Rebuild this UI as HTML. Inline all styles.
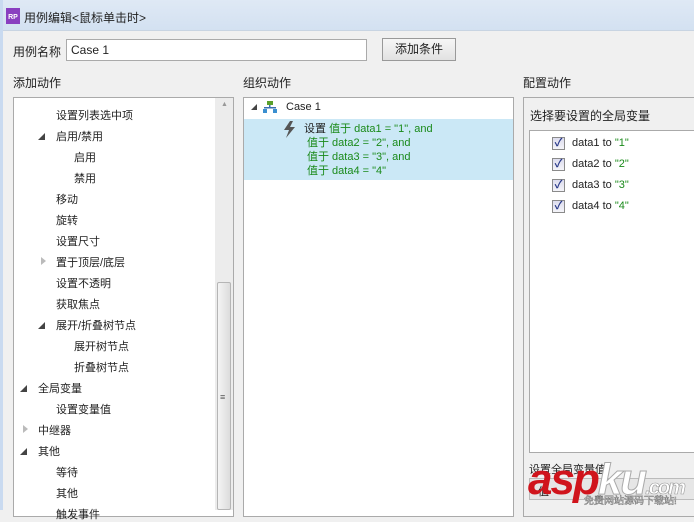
<!DOCTYPE html>
<html><head><meta charset="utf-8"><style>
*{margin:0;padding:0;box-sizing:border-box}
body{width:694px;height:510px;overflow:hidden;background:#f0f0f0;font-family:"Liberation Sans","Noto Sans CJK SC",sans-serif;font-size:11px;color:#222;position:relative}
.a{position:absolute;white-space:nowrap}
.tb{left:0;top:0;width:694px;height:31px;background:linear-gradient(#dfe9f5,#d3e1f1);border-bottom:1px solid #c8d4e2}
.panel{background:#fff;border:1px solid #aaa}
.tri{width:0;height:0;border-left:7px solid transparent;border-bottom:7px solid #444}
.tro{width:0;height:0;border-top:4px solid transparent;border-bottom:4px solid transparent;border-left:5px solid #bbb}
.g{color:#1a8a1a}
.cb{width:13px;height:13px;border:1px solid #8a8a8a;background:linear-gradient(#dde,#f4f4f8);font-size:11px;line-height:11px;text-align:center;color:#2a3a8a;font-weight:bold}
</style></head><body>
<div class="a tb"></div>
<div class="a" style="left:0;top:0;width:3px;height:510px;background:#c9daf0"></div>
<div class="a" style="left:6px;top:8px;width:14px;height:16px;background:#8a3fc0;color:#fff;font-size:7px;line-height:20px;text-align:center;font-weight:bold">RP</div>
<div class="a" style="left:24px;top:9px;font-size:12px">用例编辑&lt;鼠标单击时&gt;</div>

<div class="a" style="left:13px;top:43px;font-size:12px">用例名称</div>
<div class="a" style="left:66px;top:39px;width:301px;height:22px;background:#fff;border:1px solid #aaa;padding:3px 4px;font-size:12px">Case 1</div>
<div class="a" style="left:382px;top:38px;width:74px;height:23px;border:1px solid #999;background:linear-gradient(#f6f6f6,#e2e2e2);text-align:center;line-height:21px;font-size:12px">添加条件</div>

<div class="a" style="left:13px;top:74px;font-size:12px">添加动作</div>
<div class="a" style="left:243px;top:74px;font-size:12px">组织动作</div>
<div class="a" style="left:523px;top:74px;font-size:12px">配置动作</div>

<div class="a panel" style="left:13px;top:97px;width:221px;height:420px"></div>
<div class="a" style="left:215px;top:98px;width:18px;height:412px;background:#ececec"></div>
<div class="a" style="left:217px;top:282px;width:14px;height:228px;background:linear-gradient(90deg,#f4f4f4,#dcdcdc);border:1px solid #b5b5b5;border-radius:2px"></div>
<div class="a" style="left:220px;top:392px;font-size:9px;color:#555">≡</div>
<div class="a" style="left:221px;top:101px;font-size:7px;color:#999">▲</div>

<div class="a" style="left:56px;top:107px">设置列表选中项</div>
<div class="a tri" style="left:38px;top:133px"></div><div class="a" style="left:56px;top:128px">启用/禁用</div>
<div class="a" style="left:74px;top:149px">启用</div>
<div class="a" style="left:74px;top:170px">禁用</div>
<div class="a" style="left:56px;top:191px">移动</div>
<div class="a" style="left:56px;top:212px">旋转</div>
<div class="a" style="left:56px;top:233px">设置尺寸</div>
<div class="a tro" style="left:41px;top:257px"></div><div class="a" style="left:56px;top:254px">置于顶层/底层</div>
<div class="a" style="left:56px;top:275px">设置不透明</div>
<div class="a" style="left:56px;top:296px">获取焦点</div>
<div class="a tri" style="left:38px;top:322px"></div><div class="a" style="left:56px;top:317px">展开/折叠树节点</div>
<div class="a" style="left:74px;top:338px">展开树节点</div>
<div class="a" style="left:74px;top:359px">折叠树节点</div>
<div class="a tri" style="left:20px;top:385px"></div><div class="a" style="left:38px;top:380px">全局变量</div>
<div class="a" style="left:56px;top:401px">设置变量值</div>
<div class="a tro" style="left:23px;top:425px"></div><div class="a" style="left:38px;top:422px">中继器</div>
<div class="a tri" style="left:20px;top:448px"></div><div class="a" style="left:38px;top:443px">其他</div>
<div class="a" style="left:56px;top:464px">等待</div>
<div class="a" style="left:56px;top:485px">其他</div>
<div class="a" style="left:56px;top:506px">触发事件</div>

<div class="a panel" style="left:243px;top:97px;width:271px;height:420px"></div>
<div class="a" style="left:244px;top:119px;width:269px;height:61px;background:#cbe8f6"></div>
<div class="a tri" style="left:251px;top:104px;border-left-width:6px;border-bottom-width:6px"></div>
<svg class="a" style="left:263px;top:101px" width="14" height="12"><rect x="4" y="0" width="6" height="4" fill="#5aa02c"/><rect x="6" y="4" width="1.5" height="3" fill="#3a6fb0"/><rect x="1" y="6" width="12" height="1.5" fill="#3a6fb0"/><rect x="0" y="8" width="4" height="4" fill="#3a8fd0"/><rect x="10" y="8" width="4" height="4" fill="#3a8fd0"/></svg>
<div class="a" style="left:286px;top:101px">Case 1</div>
<svg class="a" style="left:283px;top:121px" width="14" height="17"><path d="M7 0 L1 9 L6 9 L3 17 L12 6 L7 6 L10 0Z" fill="#555"/></svg>
<div class="a" style="left:304px;top:122px;line-height:14px">设置 <span class="g">值于 data1 = "1", and</span></div>
<div class="a g" style="left:307px;top:136px;line-height:14px">值于 data2 = "2", and<br>值于 data3 = "3", and<br>值于 data4 = "4"</div>

<div class="a panel" style="left:523px;top:97px;width:180px;height:420px;background:#f0f0f0"></div>
<div class="a" style="left:530px;top:107px;font-size:12px">选择要设置的全局变量</div>
<div class="a" style="left:529px;top:130px;width:170px;height:323px;background:#fff;border:1px solid #aaa"></div>
<div class="a cb" style="left:552px;top:137px">✓</div><div class="a" style="left:572px;top:137px">data1 to <span class="g">"1"</span></div>
<div class="a cb" style="left:552px;top:158px">✓</div><div class="a" style="left:572px;top:158px">data2 to <span class="g">"2"</span></div>
<div class="a cb" style="left:552px;top:179px">✓</div><div class="a" style="left:572px;top:179px">data3 to <span class="g">"3"</span></div>
<div class="a cb" style="left:552px;top:200px">✓</div><div class="a" style="left:572px;top:200px">data4 to <span class="g">"4"</span></div>
<div class="a" style="left:529px;top:461px">设置全局变量值</div>
<div class="a" style="left:529px;top:478px;width:170px;height:22px;background:#e6e6e6;border:1px solid #bbb;padding:4px 8px">值</div>
<div class="a" style="left:528px;top:455px;font:italic bold 44px 'Liberation Sans',sans-serif;color:#d0141c;letter-spacing:-2px">asp<span style="color:#fff;-webkit-text-stroke:1px #aaa">ku</span><span style="font-size:20px;color:#fff;-webkit-text-stroke:0.6px #999">.com</span></div>
<div class="a" style="left:584px;top:492px;font-size:10px;color:#fff;-webkit-text-stroke:0.5px #777">免费网站源码下载站!</div>
</body></html>
